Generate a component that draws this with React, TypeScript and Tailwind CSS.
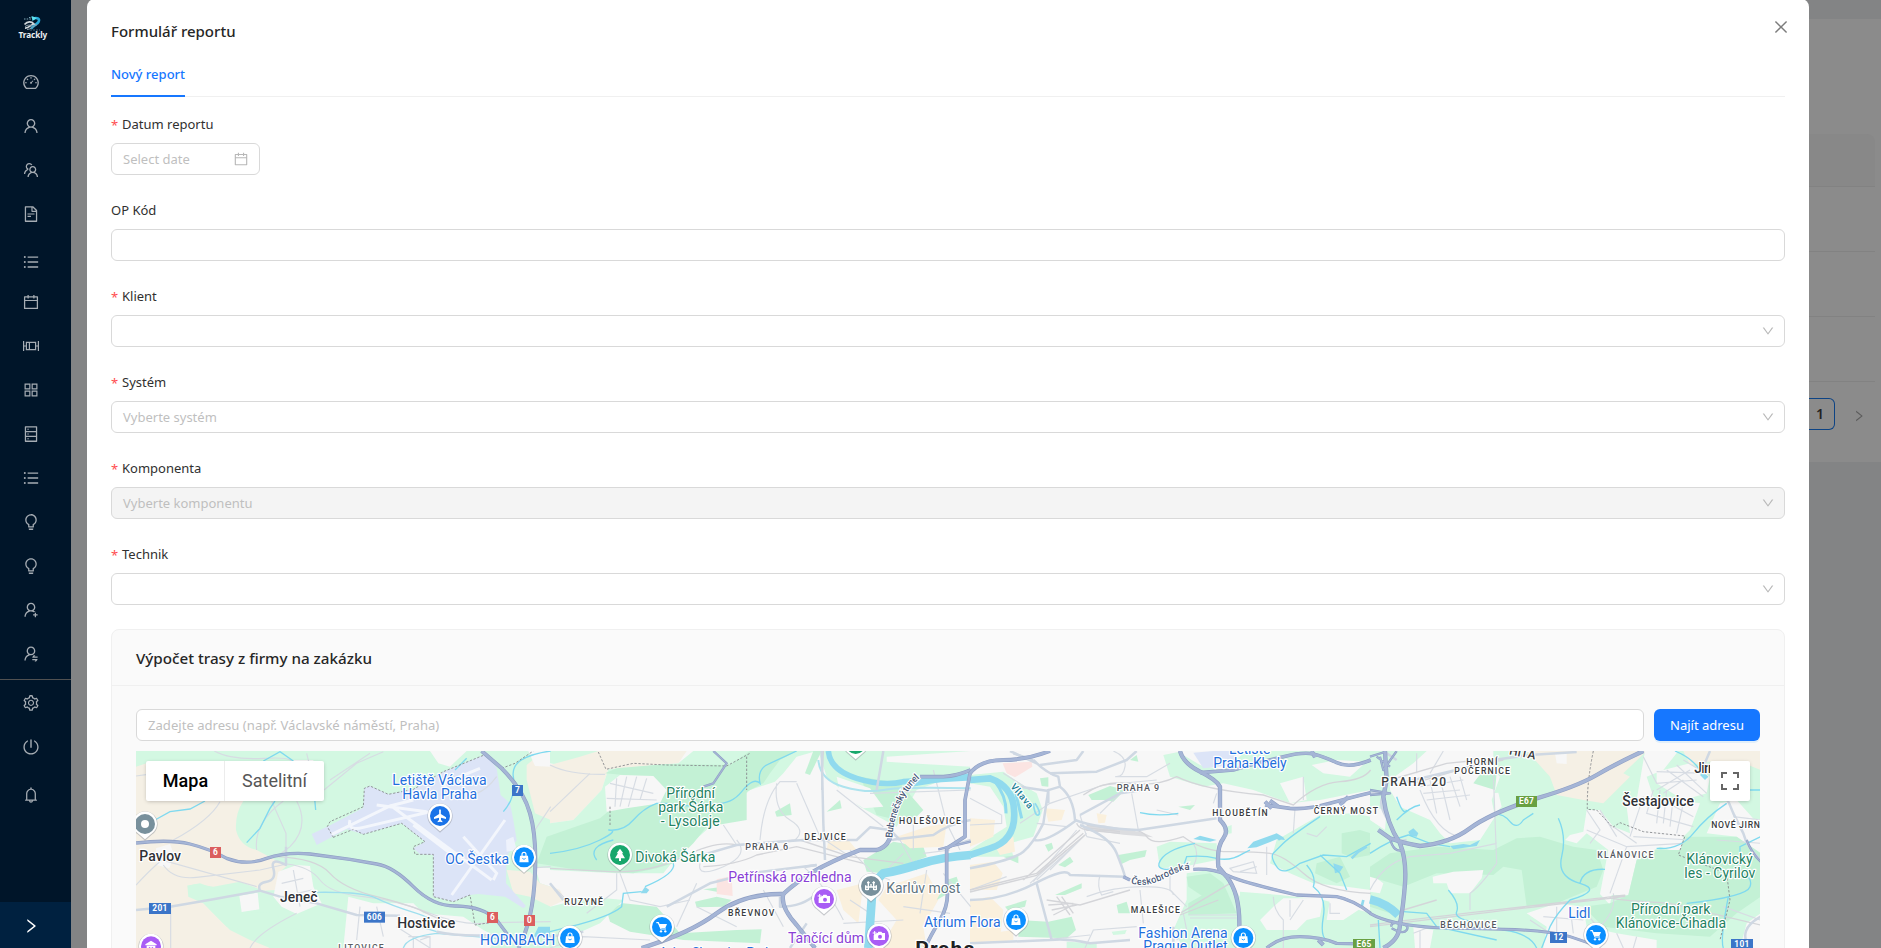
import type { ReactNode } from "react";
import type { IconType } from "react-icons";
import {
  AiOutlineAppstore,
  AiOutlineBell,
  AiOutlineBulb,
  AiOutlineCalendar,
  AiOutlineClose,
  AiOutlineDashboard,
  AiOutlineDatabase,
  AiOutlineDown,
  AiOutlineFileText,
  AiOutlinePoweroff,
  AiOutlineRight,
  AiOutlineSetting,
  AiOutlineTeam,
  AiOutlineUnorderedList,
  AiOutlineUser,
  AiOutlineUserAdd,
  AiOutlineUserSwitch,
} from "react-icons/ai";

/* ---------- Sidebar ---------- */

function Logo() {
  return (
    <svg viewBox="0 0 30 26" className="ml-[18px] mt-[15px] h-[26px] w-[30px] shrink-0" fill="none">
      <path d="M6 4h8M11 2.5h6" stroke="#7fa9b8" strokeWidth="1" strokeDasharray="1.5 1.2" />
      <path d="M15 3.4c5-1.400 7 .8 5.500 3.600-1.500 2.600-6 3.400-7.500 7" stroke="#27a9d8" strokeWidth="2.600" />
      <path d="m13.500 1 5.500 2-4.500 3Z" fill="#5fe3f2" />
      <path d="M6.500 9.500c3-3.500 7-3.500 9.500-.5-3 .2-5 4.500-9 4.200" stroke="#cfd6da" strokeWidth="1.700" />
      <path d="M7 11.500c3-2 5-1.500 7-.8M9 14.500c4 .3 7-4.500 10-4.800" stroke="#8ea0aa" strokeWidth="1" />
      <path d="M12 15h10" stroke="#4d6878" strokeWidth="1" strokeDasharray="2 1" />
      <text x="0.600" y="23.200" fontSize="8.200" fontWeight="700" fontFamily="Noto Sans, sans-serif" fill="#eef1f3" textLength="28.600">
        Trackly
      </text>
    </svg>
  );
}

function BarrelIcon({ className }: { className?: string }) {
  return (
    <svg viewBox="-1 -1 18 18" className={className} fill="none" stroke="currentColor" strokeWidth="1.200">
      <path d="M.6 3v10M15.400 3v10M.6 8h2.800M12.600 8h2.800M3.400 4.400h9.200v7.200H3.400ZM6.400 4.400v7.200" />
    </svg>
  );
}

const mainItems: (IconType | typeof BarrelIcon)[] = [
  AiOutlineDashboard,
  AiOutlineUser,
  AiOutlineTeam,
  AiOutlineFileText,
  AiOutlineUnorderedList,
  AiOutlineCalendar,
  BarrelIcon,
  AiOutlineAppstore,
  AiOutlineDatabase,
  AiOutlineUnorderedList,
  AiOutlineBulb,
  AiOutlineBulb,
  AiOutlineUserAdd,
  AiOutlineUserSwitch,
];

function Sidebar() {
  return (
    <aside className="flex w-[71px] shrink-0 flex-col bg-[#001529] text-[#a6adb4]">
      <Logo />
      <nav className="mt-[19px] flex flex-col">
        {mainItems.map((Icon, i) => (
          <div key={i} className={i === 4 ? "flex h-11 items-center pl-[22px] pt-2" : "flex h-11 items-center pl-[22px]"}>
            <Icon className="size-[18px]" />
          </div>
        ))}
      </nav>
      <div className="mt-[3px] h-px bg-[#515151]" />
      <div className="mt-px flex h-11 items-center pl-[22px]">
        <AiOutlineSetting className="size-[18px]" />
      </div>
      <div className="flex h-11 items-center pl-[22px]">
        <AiOutlinePoweroff className="size-[18px]" />
      </div>
      <div className="mt-1 flex h-11 items-center pl-[22px]">
        <AiOutlineBell className="size-[18px]" />
      </div>
      <div className="mt-auto flex h-[46px] items-center bg-[#002140] pl-[22px] pt-0.5 text-white">
        <AiOutlineRight className="size-[18px]" />
      </div>
    </aside>
  );
}

/* ---------- Form ---------- */

function Field({ label, required, children }: { label: string; required?: boolean; children: ReactNode }) {
  return (
    <div className="mb-6 flex flex-col gap-2">
      <div className="flex h-[22px] items-center gap-1 text-[13px] leading-[22px] text-[#303030]">
        {required && <span className="w-[7px] pt-0.5 text-[13px] text-[#ff4d4f]">*</span>}
        <span>{label}</span>
      </div>
      {children}
    </div>
  );
}

function Select({ placeholder, disabled }: { placeholder?: string; disabled?: boolean }) {
  return (
    <div
      className={
        disabled
          ? "flex h-8 items-center justify-between rounded-md border border-[#d9d9d9] bg-[#f4f4f4] pl-[11px] pr-[9px] text-[13px] text-[#bfbfbf]"
          : "flex h-8 items-center justify-between rounded-md border border-[#d9d9d9] bg-white pl-[11px] pr-[9px] text-[13px] text-[#bfbfbf]"
      }
    >
      <span className="pt-0.5">{placeholder}</span>
      <AiOutlineDown className="size-3.5 text-[#b8b8b8]" />
    </div>
  );
}

/* ---------- Map ---------- */

const GREEN = "#d3f8e2";
const PARK = "#c3f1d5";
const SAND = "#f5f0e5";
const TOWN = "#f7f7f7";
const SHOP = "#faf0dd";
const WATER = "#90daee";
const AIR = "#dce4f7";

type Area = [string, string];
type Line = [string, string, number];

type Tile = {
  x: number;
  areas: Area[];
  minor: string[];
  rail: string[];
  water: Line[];
  roads: string[];
  highways: Line[];
  dashed: string[];
};

const tiles: Tile[] = [
  {
    x: 0,
    areas: [
      [GREEN, "M18 33H1262V624H18Z"],
      [SAND, "M18 80 60 66 110 90 240 183H340Q315 220 318 270 330 320 380 330L470 378 445 400 440 450 400 452 330 425 250 440 200 432 172 437 175 470 220 490 300 570 360 600 420 624H18Z"],
      [GREEN, "M172 437 210 430 280 455 330 470 340 515 440 520 460 560 640 590 640 624H420L340 570 290 560 240 510Z"],
      [SAND, "M1190 75 1220 50 1262 70V240L1215 220 1190 120Z"],
      [TOWN, "M1215 380 1262 385V440L1230 430Z"],
      [SAND, "M1130 390 1200 395 1230 430 1262 440V500L1200 470 1150 460Z"],
      [TOWN, "M78 325 120 312 132 345 118 385 80 375Z"],
      [TOWN, "M445 395 500 375 540 378 550 440 575 490 500 522 455 500 430 470Z"],
      [TOWN, "M328 467 383 458 388 508 335 516Z"],
      [TOWN, "M655 470 730 490 850 490 880 520 1000 530 1060 570 1100 590 1080 624H640Z"],
      [TOWN, "M900 33H1010L960 80 925 70Z"],
      [TOWN, "M1195 33H1262V80L1215 78Z"],
      [TOWN, "M490 60H550V80H500Z"],
      [AIR, "M545 282 596 258 700 203 703 145 720 138 775 163 850 148 940 95 1070 42 1100 85 1112 165 1140 190 1150 240 1160 300 1130 350 1128 430 1188 498 1180 505 1125 470 1045 462 1020 465 970 485 910 470V345L870 343 850 325 885 305 815 250 700 283 650 268 560 315Z"],
      ["#eef2fc", "M1128 300 1150 290 1160 330 1130 335Z"],
      [WATER, "M1225 560H1262V590L1210 592Z"],
    ],
    minor: [
      "M18 435Q60 390 95 360L380 440M100 375Q130 420 200 412L390 390 470 372",
      "M130 300Q240 240 270 185M122 624V500M18 108 48 104M360 624Q380 580 500 520",
      "M470 372Q540 380 570 420T700 470 900 520 1080 548L1262 545",
      "M380 330Q370 250 460 183M425 183 468 280V330M500 183Q540 260 480 320L440 350",
      "M253 33Q300 60 400 55T480 70M582 150 680 70 760 35M600 120 720 40M530 40 540 80",
      "M455 430 520 415M460 470 545 450M490 390 510 500M690 500 680 600M740 500 760 590M800 560 900 624",
      "M835 590H900V624M850 624V590M870 600 900 590",
      "M1100 110Q1070 150 1040 160M1262 380 1220 383M1215 270 1262 200",
    ],
    rail: ["M440 350Q560 355 600 400T740 470 880 515 960 550"],
    water: [
      ["#7fd9ef", "M75 240 120 215 180 207 225 183", 4],
      ["#7fd9ef", "M350 308 390 265 420 205 435 183M400 63 450 35 490 63M553 165 557 210", 4],
      ["#9fdfee", "M560 457Q700 455 740 475T860 520 870 560L920 575M820 624Q830 590 920 580L1100 595", 4],
      ["#7fd9ef", "M1120 215Q1160 170 1150 110T1262 33M975 90 1010 55", 4],
    ],
    roads: ["M18 510 120 500 250 478 390 452 450 470 560 490 680 525 810 527M390 452Q380 430 410 425T430 385 468 375V320", "M920 575Q980 590 1100 585L1150 600"],
    highways: [
      ["#a5b5d6", "M18 309Q120 297 180 312T290 355Q350 378 410 355 470 335 540 342L660 358 740 372Q790 380 850 440T980 498Q1060 500 1100 540L1145 600", 8],
      ["#a5b5d6", "M1055 33 1115 85Q1180 150 1200 220T1215 400Q1210 540 1165 624", 10],
    ],
    dashed: [
      "M610 292 592 260 600 245 700 200 703 145 720 138 775 163 850 148 940 95 1070 42",
      "M610 292 670 268 700 283 815 250 885 305 850 320 855 343H910V470L970 485 1020 465 1035 555 1080 548",
      "M1115 85 1155 70 1210 33",
    ],
  },
  {
    x: 1260,
    areas: [
      [TOWN, "M0 33H1262V624H0Z"],
      [GREEN, "M0 33H150L110 90 0 70Z"],
      [SAND, "M0 75 90 50 145 33H410L385 70 175 88 155 150 70 240 0 250Z"],
      [SAND, "M0 438 30 450 45 480 0 500Z"],
      [GREEN, "M385 70 430 33H800L740 50 700 100 675 125 600 150 480 260 380 350 340 400 200 400 0 390V250L70 240 155 150 175 88Z"],
      [PARK, "M165 100 200 85 350 72 540 75 600 33H740L690 60 660 100 640 130 590 155 590 240 470 260 430 310 370 370 320 385 250 400 100 392 -40 370 -10 290 150 235 180 210 300 190 340 150 310 110 220 105Z"],
      [TOWN, "M165 140 210 105 310 108 350 150 330 190 230 205 170 215Z"],
      [PARK, "M170 510 220 490 320 500 390 580 560 570 635 568 630 610 400 600 240 575 180 545Z"],
      [PARK, "M435 485 500 470 545 480 520 500 440 502ZM460 448 520 440 515 458Z"],
      [GREEN, "M0 500 120 470 220 480 150 550 60 590 30 624H0Z"],
      [GREEN, "M805 33H1262V90L1100 150 1040 260 930 200 830 110Z"],
      [PARK, "M930 110 1050 130 1120 210 1080 250 980 225Z"],
      [TOWN, "M860 110 960 145 1000 200 940 205 870 160Z"],
      [TOWN, "M1010 50 1262 33V80L1080 70 1010 65Z"],
      [PARK, "M675 215 720 190 725 225 680 230ZM830 215 870 180 875 205Z"],
      [PARK, "M765 100 790 33H815L780 105Z"],
      [PARK, "M940 360 1030 305 1120 320 1130 350 1000 400 950 395Z"],
      [SHOP, "M1040 290 1130 260 1190 250 1180 320 1080 325ZM835 300 870 270 920 330 830 330Z"],
      [SHOP, "M860 450 940 430 925 550 880 510ZM1010 440 1130 400 1170 470 1120 560 1130 624H990L1040 540 985 480Z"],
      ["#fbe4e2", "M500 418 545 408 548 468 500 462Z"],
      [WATER, "M272 460 285 440 298 450 290 460Z"],
      [PARK, "M1160 480 1230 440 1220 410 1190 420Z"],
    ],
    minor: [
      "M0 75Q60 105 165 103M0 215 120 100M0 430 70 500M110 520 200 450V400M210 400 240 480 330 500 420 480",
      "M180 130 310 160M200 115 195 200M230 110 210 200M260 110 235 200M290 115 270 180M170 175 320 180",
      "M630 300Q640 180 690 125H740M680 130Q670 210 720 240T735 300M520 255 560 315M740 130 810 290 900 350",
      "M0 624 100 590 300 600M440 430 380 560M560 300Q600 345 520 380T450 370M860 150 1000 260",
      "M900 330 970 400 1020 420M1050 300 1100 390M1120 340 1200 330M1090 250V330M1000 400 1060 340",
      "M760 380Q830 440 880 540M880 550 1060 540M1130 390 1110 520M1060 500 1200 520M1180 400 1262 500",
      "M960 160 1262 150M1150 90 1190 250 1230 330M900 480 960 520M640 450 700 560M440 500 560 560",
    ],
    rail: ["M0 385 180 395Q300 400 400 350T560 315L740 300M460 380Q560 375 620 345L740 320 940 370", "M750 300 900 350 1060 370M820 33 815 150"],
    water: [
      ["#7fd9ef", "M0 340Q90 330 150 300T175 270Q220 275 250 240T320 190H350Q430 205 470 190 540 200 575 155T630 130Q620 85 660 70L740 33", 4],
      ["#7fd9ef", "M140 360Q110 320 190 300M285 440Q380 400 370 370M275 455 220 460 215 500Q180 530 60 560L0 575", 4],
      [WATER, "M835 33Q840 90 920 115T1060 125L1262 113", 17],
      ["#aee3ee", "M805 60Q810 120 880 140T1000 150 1262 145", 6],
      [WATER, "M1262 345Q1180 350 1110 372T1000 400Q965 430 965 480L955 624", 26],
      [WATER, "M1080 135 1262 105", 12],
    ],
    roads: [
      "M440 350 560 315 760 300 920 300 960 262 1020 270 1050 300",
      "M815 33 820 250 825 360M350 500 480 430 600 400 800 375M0 430 40 480",
      "M1262 240Q1200 250 1150 285L1020 300M1262 300 1180 325M720 624 770 550M0 590 100 575",
      "M765 380 800 375M690 470V500Q760 500 800 460M1000 33 980 150",
    ],
    highways: [
      ["#a5b5d6", "M490 33 530 70 490 130 460 140", 5],
      ["#a5b5d6", "M275 624Q420 580 500 520T700 462Q740 425 790 395T930 330H980Q1020 320 1025 270", 11],
      ["#a5b5d6", "M700 462Q690 500 740 555L795 624", 11],
      ["#a5b5d6", "M1110 110H1180Q1220 108 1262 90M1190 320V430Q1200 490 1170 540T1125 624M1262 90 1245 180V290L1190 325", 9],
      ["#a5b5d6", "M1165 328 1262 305", 5],
    ],
    dashed: ["M145 36 168 88 250 70 350 75 530 78 600 40M590 50V150M180 200V260"],
  },
  {
    x: 2520,
    areas: [
      [TOWN, "M0 33H1202V624H0Z"],
      ["#fbe4e2", "M98 70 185 65 187 80 135 112 110 100Z"],
      [GREEN, "M0 105 100 95 150 130 200 160 218 210 190 290 120 310 130 350 0 350Z"],
      [TOWN, "M0 130 60 140 100 200 110 260 0 330Z"],
      [SHOP, "M0 235 75 240 70 290 0 320ZM70 310 130 290 135 335 90 345ZM225 205 285 210 275 240 235 245ZM380 220 410 225 405 248 385 250Z"],
      [SHOP, "M0 375 70 365 98 400 80 450 0 450ZM0 480 60 470 100 510 90 600 0 610Z"],
      [SHOP, "M60 580 130 570 130 600 60 610Z"],
      [PARK, "M355 165 420 138 465 150 430 185 410 180 365 180ZM480 60 500 45 505 65ZM210 115 235 112 235 140 215 138ZM625 200 675 195 660 210Z"],
      [PARK, "M445 345 530 330 525 350 480 360 455 372ZM265 375 300 350 310 365 285 382ZM225 315 245 308 250 325 235 335ZM100 350 145 345 145 370Z"],
      [PARK, "M255 465 335 430 335 445 285 465ZM105 500 170 480 165 500 115 512ZM440 495 470 485 480 520 445 520Z"],
      [PARK, "M145 540 235 545 305 530 318 570 290 595 145 590Z"],
      [GREEN, "M290 605 380 610 380 624H290ZM425 575 470 570 465 582 430 585Z"],
      [GREEN, "M580 45 640 33H1202V150L1050 180 960 190 850 150 760 130 700 140 600 110Z"],
      [TOWN, "M620 33H830L760 90 690 75Z"],
      [AIR, "M670 38 730 33H800L790 75 700 85Z"],
      [TOWN, "M1025 75 1100 60 1190 65 1140 110 1060 100ZM930 130 1000 110 1010 180 960 190Z"],
      [TOWN, "M755 150 970 190 1040 220 940 300 780 320Z"],
      [GREEN, "M560 320 600 305 740 310 740 360 640 380 570 385Z"],
      [GREEN, "M770 260 785 255 785 280 770 282Z"],
      [GREEN, "M650 400 720 390 770 410 830 500 800 624H640L610 570 650 480Z"],
      [GREEN, "M810 455 930 465 1060 480 1202 520V624H810Z"],
      [GREEN, "M920 300 1050 225 1150 220 1202 230V450L1130 440 1030 430 960 400 900 370Z"],
      [PARK, "M1115 280 1170 270 1202 280V345L1150 355 1115 340ZM1040 370 1110 350 1140 410 1100 430 1035 400ZM650 410 720 400 760 430 700 470 655 440Z"],
      [PARK, "M655 490 760 430 800 520 655 525Z"],
      [TOWN, "M910 500 940 475 1060 475 1050 530 1010 540 980 570 890 570 870 540ZM1080 480 1180 500 1120 540 1070 540Z"],
      [WATER, "M832 325 850 305 920 280 940 292 945 300 920 298 860 322Z"],
      [WATER, "M670 297 690 287 740 300 720 305ZM1090 370 1120 380 1110 395 1095 400Z"],
      ["#dcdde0", "M335 258 400 256 460 266 520 278 550 292 460 284 400 276 350 272Z"],
    ],
    minor: [
      "M430 33Q470 50 465 80T440 110 530 110M530 110 600 70M0 175 95 225V250L0 255M150 250 240 190 400 135 560 120",
      "M485 160 505 270M330 225 350 290M200 420 330 300M190 425 320 270M180 430 290 330M240 390 350 280",
      "M390 405Q380 440 395 465L430 455M350 470Q430 440 520 440T610 465M520 550 510 450M390 220 450 160",
      "M740 160 730 190M670 310Q690 340 670 380M600 400 600 450 650 500M560 210 625 225",
      "M780 385 850 365 860 400 790 395ZM890 320V405M810 395 860 380M970 280 975 205M1000 110 1000 180",
      "M910 470Q910 510 940 540V624M960 480V530M1000 480 960 540M1080 490 1080 520 1110 520M1010 280 1040 290 1070 260",
      "M655 525H800M660 534H800M640 520 650 570 620 600M345 624 370 570 500 560M360 585 220 600",
      "M200 250 290 260M0 450 110 410M100 100 180 150M350 290 450 310",
    ],
    rail: [
      "M320 250Q330 280 420 270T530 290 640 290Q700 335 780 335T900 340 1000 400 1202 460",
      "M0 450 200 400 340 280M0 456 200 406 345 285M160 420 330 270",
      "M340 165Q400 120 480 130T620 110Q700 150 880 165L970 195Q1040 130 1110 125T1202 90",
      "M230 480 330 495 480 450M235 495 310 490M245 510 320 495M250 525 310 495M260 470 300 525M275 470 310 520",
      "M630 520 780 430M630 525 745 480M340 262 450 275M350 270 450 280M350 256 440 268",
    ],
    water: [
      [WATER, "M0 120 60 115Q130 140 132 210 140 300 60 325L0 345", 20],
      [WATER, "M75 125Q110 170 108 220M135 150 155 235", 9],
      [WATER, "M190 190Q195 230 205 225T195 190", 5],
      ["#7fd9ef", "M675 310Q580 330 567 370 560 400 640 380M640 380 650 350Q700 345 740 355T820 340L840 330M510 218Q560 230 625 220", 4],
      ["#7fd9ef", "M1050 230Q960 290 940 310T910 340 920 380 990 370L1060 345 1130 350 1202 310M1050 345 1110 400 1130 450M1010 375Q1040 410 1030 440 1070 470 1060 530T1070 600", 4],
      [WATER, "M1145 355 1165 335 1190 320M920 285 930 300M1180 480 1175 500", 8],
    ],
    roads: [
      "M0 385Q130 360 160 335T220 250L235 150V190",
      "M190 60Q230 100 265 110L270 140 230 152 150 140M270 140Q310 170 315 240 380 265 505 270L740 235",
      "M330 225 450 160 520 150M330 255Q420 290 440 340T465 410M0 480Q100 480 195 430T300 405L465 410",
      "M200 430 245 600M0 610 240 600Q300 595 360 610L480 600M210 75 320 60 340 33M190 298Q220 315 320 240M120 33 200 70",
      "M240 100 380 95 470 60 500 33M130 40 190 60M610 624V560",
    ],
    highways: [
      ["#a5b5d6", "M0 100Q30 60 100 60 170 60 240 33", 10],
      ["#a5b5d6", "M630 33Q640 70 690 95T750 140V240Q780 270 760 295 740 320 745 380L770 410Q810 460 808 560", 11],
      ["#a5b5d6", "M690 98 790 90 860 70 940 50Q1000 35 1030 42T1100 68 1202 60M885 195 960 205Q1010 210 1080 190T1202 158", 9],
      ["#a5b5d6", "M670 388Q730 385 770 405T980 465L1100 470Q1150 480 1202 520M460 410 480 420", 8],
      ["#a5b5d6", "M890 624Q930 590 990 590T1100 610L1202 612", 8],
      ["#a5b5d6", "M885 185 905 205M900 182 925 200M1110 195 1135 170M1025 33 1035 52M1045 600 1060 615M745 385 770 410", 10],
    ],
    dashed: [],
  },
  {
    x: 3720,
    areas: [
      [GREEN, "M0 33H1172V624H0Z"],
      [TOWN, "M60 120 130 70 170 33H370V90L390 110 365 180 375 230 330 300 240 310 210 280 180 240 90 200 60 150Z"],
      [TOWN, "M0 200 50 210 45 270 0 240ZM0 400 40 430 30 460 0 455Z"],
      [SAND, "M470 33H830L760 100 780 110 700 190 640 180 560 165 540 110Z"],
      [TOWN, "M555 40 590 38 590 72 560 70Z"],
      [TOWN, "M825 33 925 33 880 90 830 110 850 170 990 190 960 270 940 290 930 340 870 320 800 360 775 465 725 465 720 495 690 462 715 330 650 280 620 310 585 300 600 285 640 275 650 210 690 210 730 260 780 280 770 200 800 180Z"],
      [SAND, "M940 33H1172V90L1110 65H1010L960 75Z"],
      [TOWN, "M860 95 960 70 1020 110 1010 160 940 180 860 130Z"],
      [TOWN, "M1050 190 1100 180 1172 260V340L1100 290 1010 280Z"],
      [TOWN, "M1130 550 1172 520V624H1110ZM130 560 190 570 180 624H135Z"],
      [PARK, "M60 340 200 320 370 330 440 295 510 290 610 320 680 330 700 390 680 440 560 490 470 500 455 390 400 380 370 405 200 400 100 440 0 410V380Z"],
      [PARK, "M840 330 930 330 950 290 1100 290 1172 340V470L1100 520 1020 590 860 580 700 560 640 500 720 490 775 465 800 360Z"],
      [PARK, "M310 130 340 90 380 100 375 150ZM60 520 0 500 0 480Z"],
      [TOWN, "M188 410 250 395 340 390 335 415 300 460 240 460 230 430 190 430Z"],
      [TOWN, "M470 520 560 490 640 500 650 560 740 580 860 600 860 624H520L530 560Z"],
      [TOWN, "M370 160 385 158 395 200 375 220Z"],
      [WATER, "M115 275 130 265 145 280 140 290 120 288ZM240 318 280 312 300 315 330 300 320 318 250 328Z"],
    ],
    minor: [
      "M150 140 280 120M160 160 270 150M170 180 300 165M180 120 200 220M210 115 240 240M240 110 270 200M270 110 290 180M150 150Q200 280 270 290",
      "M370 100 380 370Q330 440 300 460V510M0 450Q40 370 120 350L240 340 380 310M140 100 140 40M220 33 180 100",
      "M820 50 850 110 860 130 980 120M860 150 960 90M880 160 940 120M850 150 830 220 970 260M860 170 970 230M870 150 860 250M890 150 880 250M910 170 900 260M940 190 920 280",
      "M650 270 770 320 940 310M650 210 690 270 660 310M690 210 740 290M790 290 960 300M770 320 720 460M745 340 800 350M730 260 800 310M820 170 780 290",
      "M730 460Q740 510 690 560M520 530 640 540M480 540 540 580M560 500V600M600 500 610 580M640 510 700 580",
      "M860 95 1010 100M920 75 1010 160M890 90 1000 170M940 60 990 90M130 580 180 560M150 570 150 624M740 580 760 624M800 590 790 624",
      "M1040 300 1172 310M1172 240 1090 230M1060 500 1172 540",
    ],
    rail: ["M0 555Q200 530 330 515T640 480 740 468 900 490M0 560Q200 536 330 520T640 484 740 470", "M60 120 230 70 330 60M130 130 300 80 400 60", "M900 490 1172 555M100 510 200 480"],
    water: [
      ["#7fd9ef", "M370 222Q400 220 420 245T460 240L490 220M0 340Q60 300 115 285L180 310 240 320M80 240Q120 200 150 195M80 170Q100 230 110 210", 4],
      ["#7fd9ef", "M565 235Q590 290 575 350T630 430 600 480Q560 520 540 560L515 624M630 430Q640 385 705 388", 4],
      ["#7fd9ef", "M860 325Q930 330 970 280T1070 190M915 33Q980 60 1000 110M950 490Q1130 470 1140 440T1110 400L1110 320 1172 290M1110 150 1172 150", 4],
      ["#7fd9ef", "M235 450Q270 490 260 515T340 550L400 570Q480 580 500 624M25 540 30 624M100 515 170 520 200 560 380 600M1075 470Q1050 600 1060 624", 4],
      [WATER, "M0 478Q50 490 85 525", 25],
      [WATER, "M995 100 1010 115", 14],
    ],
    roads: [
      "M90 130 300 80 370 60 480 45 620 36",
      "M0 160Q60 150 40 170T60 250M30 270Q60 310 110 300M40 33 80 60",
      "M1172 360Q1130 320 1120 280L1090 220Q1080 190 1060 160M1000 80 1020 33M1172 530Q1100 570 1140 624",
    ],
    highways: [
      ["#a5b5d6", "M820 33Q740 70 680 105T500 175Q360 220 300 265T150 318Q100 310 60 295L25 270M45 33 50 120 40 170Q50 250 90 310 110 360 105 430T90 550Q90 600 40 624", 11],
      ["#a5b5d6", "M0 520Q60 555 200 563L400 568Q530 570 600 590L660 610", 7],
      ["#a5b5d6", "M0 150 60 160 0 165M20 50 60 80M80 33 40 90 30 50M65 560Q60 545 90 550T110 570 65 565M60 295Q70 340 100 330", 5],
      ["#a5b5d6", "M0 50 45 36M1130 300Q1145 340 1172 365", 5],
    ],
    dashed: ["M670 33Q650 130 652 208L680 210 728 262 750 248 820 275 945 288 925 345 1070 400 1080 480 1050 600"],
  },
];

type LabelProps = { x: number; y: number; len: number; children: string; size?: number; color?: string; weight?: number; rotate?: number };

function Label({ x, y, len, children, size = 42, color = "#1f6fdd", weight = 400, rotate }: LabelProps) {
  return (
    <text
      x={x}
      y={y}
      textLength={len}
      fontSize={size}
      fill={color}
      fontWeight={weight}
      fontFamily="Roboto, sans-serif"
      stroke="#ffffff"
      strokeWidth="7"
      strokeLinejoin="round"
      paintOrder="stroke"
      transform={rotate ? `rotate(${rotate} ${x} ${y})` : undefined}
    >
      {children}
    </text>
  );
}

function Pin({ x, y, color, children }: { x: number; y: number; color: string; children?: ReactNode }) {
  return (
    <g transform={`translate(${x} ${y})`}>
      <path d="M-22 31 0 50 22 31A38 38 0 1 0-22 31Z" fill="#8a8f96" opacity=".45" />
      <path d="M-22 27 0 46 22 27A36 36 0 1 0-22 27Z" fill="#fff" />
      <circle r="30" fill={color} />
      {children}
    </g>
  );
}

const BagGlyph = () => (
  <g>
    <path d="M-12-5H12L14 15H-14Z" fill="#fff" />
    <path d="M-6-4V-9A6 6 0 0 1 6-9V-4" fill="none" stroke="#fff" strokeWidth="3.500" />
    <path d="M-5 3Q0 9 5 3" fill="none" stroke="#0a8fff" strokeWidth="2.500" />
  </g>
);

const CartGlyph = () => (
  <g>
    <path d="M-17-13H-11L-3 6H12" fill="none" stroke="#fff" strokeWidth="3.500" />
    <path d="M-10-9H15L10 3H-5Z" fill="#fff" />
    <circle cx="-3" cy="13" r="3.500" fill="#fff" />
    <circle cx="10" cy="13" r="3.500" fill="#fff" />
  </g>
);

const CameraGlyph = () => (
  <g>
    <path d="M-16-2V12H18V-9H10L7-13H-2L-4-9H-6" fill="#fff" />
    <path d="M-13-15V-3M-19-9H-7" stroke="#fff" strokeWidth="3" />
    <circle cx="3" cy="2" r="6" fill="#a95cf5" />
  </g>
);

function Shield({ x, y, w, color, children }: { x: number; y: number; w: number; color: string; children: string }) {
  return (
    <g>
      <rect x={x} y={y} width={w} height="33" fill={color} />
      <text x={x + w / 2} y={y + 25} textAnchor="middle" fontSize="25" fontWeight="700" letterSpacing="1" fill="#fff" fontFamily="Roboto, sans-serif">
        {children}
      </text>
    </g>
  );
}

const DARK = "#2f3136";
const PARKTEXT = "#238262";
const VIOLET = "#8a3fd6";
const BLUE = "#3b75c8";
const RED = "#db5e5e";

function RouteMap() {
  return (
    <svg viewBox="18 33 4872 591" className="block h-[197px] w-[1624px]" preserveAspectRatio="none">
      {tiles.map((t) => (
        <g key={t.x} transform={`translate(${t.x} 0)`}>
          {t.areas.map(([fill, d], i) => (
            <path key={i} d={d} fill={fill} />
          ))}
        </g>
      ))}
      {tiles.map((t) => (
        <g key={t.x} transform={`translate(${t.x} 0)`} fill="none">
          {t.minor.map((d, i) => (
            <path key={i} d={d} stroke="#d7dce3" strokeWidth="3.500" />
          ))}
          {t.rail.map((d, i) => (
            <path key={i} d={d} stroke="#d4d5d9" strokeWidth="4" />
          ))}
          {t.water.map(([c, d, w], i) => (
            <path key={i} d={d} stroke={c} strokeWidth={w} />
          ))}
          {t.roads.map((d, i) => (
            <path key={i} d={d} stroke="#cfd8e3" strokeWidth="7.500" strokeLinejoin="round" />
          ))}
          {t.dashed.map((d, i) => (
            <path key={i} d={d} stroke="#85888c" strokeWidth="2.600" strokeDasharray="7 5" />
          ))}
        </g>
      ))}
      <g stroke="#fff" opacity=".65" fill="none" strokeWidth="9">
        <path d="M605 283 780 198 850 180M780 195 1085 420M965 465 1125 240M660 240Q650 275 700 262L900 215M740 195 890 215M850 255 1000 370M960 160 940 130 1050 85M1090 420 1100 400 1000 290" />
      </g>
      {tiles.map((t) => (
        <g key={t.x} transform={`translate(${t.x} 0)`} fill="none" strokeLinejoin="round">
          {t.highways.map(([, d, w], i) => (
            <path key={i} d={d} stroke="#8f9fc4" strokeWidth={w + 2} />
          ))}
          {t.highways.map(([c, d, w], i) => (
            <path key={i} d={d} stroke={c} strokeWidth={w - 1.500} />
          ))}
        </g>
      ))}

      {/* Pavlov – Hostivice */}
      <Label x={787} y={135} len={283}>Letiště Václava</Label>
      <Label x={817} y={177} len={224}>Havla Praha</Label>
      <Label x={946} y={373} len={191}>OC Šestka</Label>
      <Label x={1050} y={616} len={226}>HORNBACH</Label>
      <Label x={28} y={363} len={125} color={DARK} weight={500}>Pavlov</Label>
      <Label x={450} y={486} len={113} color={DARK} weight={500}>Jeneč</Label>
      <Label x={802} y={565} len={174} color={DARK} weight={500}>Hostivice</Label>
      <Label x={625} y={634} len={136} size={26} color="#5a5d62" weight={500}>LITOVICE</Label>
      <Shield x={240} y={321} w={33} color={RED}>6</Shield>
      <Shield x={57} y={489} w={66} color={BLUE}>201</Shield>
      <Shield x={702} y={515} w={63} color={BLUE}>606</Shield>
      <Shield x={1071} y={516} w={33} color={RED}>6</Shield>
      <Shield x={1182} y={525} w={33} color={RED}>0</Shield>
      <Shield x={1146} y={135} w={33} color={BLUE}>7</Shield>
      <Pin x={45} y={252} color="#78909c"><circle r="12" fill="#fff" /></Pin>
      <Pin x={930} y={228} color="#1a73e8">
        <path d="M-2.500-18Q0-22 2.500-18V-6L18 4V9L3 5V12L7 16V19L0 17-7 19V16L-3 12V5L-18 9V4L-2.500-6Z" fill="#fff" />
      </Pin>
      <Pin x={1182} y={352} color="#0a8fff"><BagGlyph /></Pin>
      <Pin x={63} y={619} color="#a95cf5">
        <path d="M-17-6 0-17 17-6V-3H-17ZM-13-2H13V20H-13Z" fill="#fff" />
        <path d="M-5 12V3L0 7 5 3V12" stroke="#a95cf5" strokeWidth="3" fill="none" />
      </Pin>

      {/* Dejvice – Holešovice */}
      <g transform="translate(1260 0)">
        <Label x={349} y={175} len={146} color={PARKTEXT}>Přírodní</Label>
        <Label x={325} y={217} len={195} color={PARKTEXT}>park Šárka</Label>
        <Label x={332} y={259} len={177} color={PARKTEXT}>- Lysolaje</Label>
        <Label x={256} y={367} len={240} color={PARKTEXT}>Divoká Šárka</Label>
        <Label x={535} y={426} len={370} color={VIOLET}>Petřínská rozhledna</Label>
        <Label x={714} y={609} len={228} color={VIOLET}>Tančící dům</Label>
        <Label x={1009} y={459} len={222} color="#5f7582">Karlův most</Label>
        <Label x={1122} y={562} len={230}>Atrium Flora</Label>
        <Label x={586} y={330} len={128} size={27} color="#54585e" weight={500}>PRAHA 6</Label>
        <Label x={763} y={299} len={124} size={26} color="#3a3c40" weight={500}>DEJVICE</Label>
        <Label x={1047} y={251} len={186} size={26} color="#3a3c40" weight={500}>HOLEŠOVICE</Label>
        <Label x={43} y={494} len={116} size={26} color="#3a3c40" weight={500}>RUZYNĚ</Label>
        <Label x={534} y={527} len={139} size={26} color="#3a3c40" weight={500}>BŘEVNOV</Label>
        <Label x={1096} y={649} len={178} size={63} color="#202124" weight={700}>Praha</Label>
        <Label x={326} y={655} len={340} size={42}>Avion Shopping Park</Label>
        <path id="tunnel" d="M1027 294Q1035 180 1112 112" fill="none" />
        <text fontSize="29" fontWeight="500" fill="#4a5a78" stroke="#fff" strokeWidth="6" paintOrder="stroke" fontFamily="Roboto, sans-serif">
          <textPath href="#tunnel" textLength="203">Bubenečský tunel</textPath>
        </text>
        <Pin x={210} y={345} color="#18a76c"><path d="M0-19 10-5H6L15 10H3V18H-3V10H-15L-6-5H-10Z" fill="#fff" /></Pin>
        <Pin x={917} y={12} color="#18a76c" />
        <Pin x={822} y={477} color="#a95cf5"><CameraGlyph /></Pin>
        <Pin x={987} y={588} color="#a95cf5"><CameraGlyph /></Pin>
        <Pin x={963} y={438} color="#78909c">
          <path d="M-16 12V-2M-8 12V-14M8 12V-14M16 12V-2M0 3V-6M-16 3H16M-12-10H-4M4-10H12M-16 11H-8M8 11H16" stroke="#fff" strokeWidth="4" />
        </Pin>
        <Pin x={336} y={561} color="#0a8fff"><CartGlyph /></Pin>
        <Pin x={60} y={594} color="#0a8fff"><BagGlyph /></Pin>
      </g>

      {/* Praha 9 – Černý Most */}
      <g transform="translate(2520 0)">
        <Label x={777} y={43} len={124}>Letiště</Label>
        <Label x={730} y={84} len={220}>Praha-Kbely</Label>
        <Label x={505} y={594} len={268}>Fashion Arena</Label>
        <Label x={520} y={633} len={253}>Prague Outlet</Label>
        <Label x={440} y={153} len={127} size={27} color="#54585e" weight={500}>PRAHA 9</Label>
        <Label x={727} y={227} len={166} size={26} color="#3a3c40" weight={500}>HLOUBĚTÍN</Label>
        <Label x={1031} y={222} len={193} size={26} color="#3a3c40" weight={500}>ČERNÝ MOST</Label>
        <Label x={482} y={518} len={148} size={26} color="#3a3c40" weight={500}>MALEŠICE</Label>
        <Label x={120} y={140} len={88} size={29} color="#1b7f95" weight={500} rotate={50}>Vltava</Label>
        <path id="ceskobrodska" d="M482 430Q530 445 590 412T670 395" fill="none" />
        <text fontSize="29" fontWeight="500" fill="#4a5a78" stroke="#fff" strokeWidth="6" paintOrder="stroke" fontFamily="Roboto, sans-serif">
          <textPath href="#ceskobrodska" textLength="186">Českobrodská</textPath>
        </text>
        <Pin x={138} y={540} color="#0a8fff"><BagGlyph /></Pin>
        <Pin x={820} y={594} color="#0a8fff"><BagGlyph /></Pin>
        <Shield x={1149} y={597} w={66} color="#69a042">E65</Shield>
      </g>

      {/* Praha 20 – Klánovice */}
      <g transform="translate(3720 0)">
        <Label x={34} y={138} len={194} size={36} color="#3a3c40" weight={500}>PRAHA 20</Label>
        <Label x={289} y={75} len={93} size={26} color="#3a3c40" weight={500}>HORNÍ</Label>
        <Label x={253} y={102} len={167} size={26} color="#3a3c40" weight={500}>POČERNICE</Label>
        <Label x={416} y={43} len={80} size={36} color="#3a3c40" weight={500} rotate={11}>HITA</Label>
        <Label x={682} y={354} len={168} size={26} color="#54585e" weight={500}>KLÁNOVICE</Label>
        <Label x={211} y={564} len={168} size={26} color="#54585e" weight={500}>BĚCHOVICE</Label>
        <Label x={1024} y={264} len={163} size={26} color="#3a3c40" weight={500}>NOVÉ JIRNY</Label>
        <Label x={757} y={198} len={215} color={DARK} weight={500}>Šestajovice</Label>
        <Label x={973} y={99} len={82} color={DARK} weight={500}>Jirny</Label>
        <Label x={949} y={373} len={199} color={PARKTEXT}>Klánovický</Label>
        <Label x={943} y={415} len={213} color={PARKTEXT}>les - Cyrilov</Label>
        <Label x={783} y={523} len={238} color={PARKTEXT}>Přírodní park</Label>
        <Label x={737} y={565} len={331} color={PARKTEXT}>Klánovice-Čihadla</Label>
        <Label x={595} y={535} len={66}>Lidl</Label>
        <Shield x={438} y={168} w={63} color="#69a042">E67</Shield>
        <Shield x={540} y={576} w={51} color={BLUE}>12</Shield>
        <Shield x={1083} y={597} w={66} color={BLUE}>101</Shield>
        <Pin x={678} y={585} color="#0a8fff"><CartGlyph /></Pin>
      </g>
    </svg>
  );
}

/* ---------- Page behind the dialog ---------- */

function DimmedPage() {
  return (
    <div className="flex min-w-0 flex-1 flex-col bg-[#838485]">
      <div className="mt-[19px] flex h-[443px] flex-col bg-[#8b8b8b] pt-[115px]">
        <div className="mr-1.5 h-[53px] rounded-tr-lg border-b border-[#828282] bg-[#888888]" />
        <div className="mr-1.5 h-[65px] border-b border-[#828282]" />
        <div className="mr-1.5 h-[65px] border-b border-[#828282]" />
        <div className="mr-1.5 h-[65px] border-b border-[#828282]" />
        <div className="mt-4 flex items-center">
          <div className="flex h-8 w-[26px] items-center rounded-r-md border border-l-0 border-[#0d4384] pl-[7px] text-sm font-semibold text-[#222]">1</div>
          <AiOutlineRight className="ml-[17px] mt-1 size-3.5 text-[#5c5c5c]" />
        </div>
      </div>
    </div>
  );
}

export default function App() {
  return (
    <div className="flex h-screen overflow-hidden bg-[#838485] font-['Noto_Sans',sans-serif] text-[#262626]">
      <Sidebar />

      <main className="-mt-px ml-4 flex h-[1200px] w-[1722px] shrink-0 flex-col rounded-t-lg bg-white px-6 pt-5">
        <header className="flex h-6 items-center justify-between">
          <h1 className="text-[15px] font-medium leading-6">Formulář reportu</h1>
          <AiOutlineClose className="-mr-[5px] -mt-[9px] size-[18px] text-[#7c7c7c]" />
        </header>

        <div className="mt-2 flex h-[46px] border-b border-[#f0f0f0]">
          <div className="flex h-[46px] w-[74px] items-center whitespace-nowrap border-b-2 border-[#1677ff] pt-[3px] text-[13px] font-medium text-[#1677ff]">Nový report</div>
        </div>

        <div className="mt-4 flex flex-col">
          <Field label="Datum reportu" required>
            <div className="flex h-8 w-[149px] items-center justify-between rounded-md border border-[#d9d9d9] pl-[11px] pr-2.5 text-[13px] text-[#bfbfbf]">
              <span className="pt-0.5">Select date</span>
              <AiOutlineCalendar className="size-4 text-[#b8b8b8]" />
            </div>
          </Field>
          <Field label="OP Kód">
            <div className="h-8 rounded-md border border-[#d9d9d9] bg-white" />
          </Field>
          <Field label="Klient" required>
            <Select />
          </Field>
          <Field label="Systém" required>
            <Select placeholder="Vyberte systém" />
          </Field>
          <Field label="Komponenta" required>
            <Select placeholder="Vyberte komponentu" disabled />
          </Field>
          <Field label="Technik" required>
            <Select />
          </Field>
        </div>

        <section className="flex flex-1 flex-col rounded-t-lg border border-[#f0f0f0] bg-[#fafafa]">
          <h2 className="flex h-14 items-center border-b border-[#f0f0f0] px-6 pt-0.5 text-[15.200px] font-medium">Výpočet trasy z firmy na zakázku</h2>
          <div className="flex flex-col gap-2.5 px-6 pt-[23px]">
            <div className="flex gap-2.5">
              <div className="flex h-8 flex-1 items-center rounded-md border border-[#d9d9d9] bg-white px-[11px] pt-0.5 text-[13.100px] text-[#bfbfbf]">
                Zadejte adresu (např. Václavské náměstí, Praha)
              </div>
              <button className="h-8 w-[106px] rounded-md bg-[#1677ff] pt-px text-[13px] text-white shadow-[0_2px_0_rgba(5,145,255,0.1)]">Najít adresu</button>
            </div>
            <div className="relative h-[197px] overflow-hidden">
              <RouteMap />
              <div className="absolute left-2.5 top-2.5 flex h-10 rounded-xs bg-white font-['Roboto',sans-serif] text-lg shadow-[0_1px_4px_-1px_rgba(0,0,0,0.3)]">
                <div className="flex w-[79px] items-center justify-center border-r border-[#ececec] pl-px font-medium text-black">Mapa</div>
                <div className="flex w-[99px] items-center justify-center text-[#565656]">Satelitní</div>
              </div>
              <div className="absolute right-2.5 top-2.5 flex size-10 items-center justify-center rounded-xs bg-white shadow-[0_1px_4px_-1px_rgba(0,0,0,0.3)]">
                <svg viewBox="0 0 18 18" className="size-[18px]" fill="#666">
                  <path d="M0 0v6h2V2h4V0H0zm16 0h-4v2h4v4h2V0h-2zm0 16h-4v2h6v-6h-2v4zM2 12H0v6h6v-2H2v-4z" />
                </svg>
              </div>
            </div>
          </div>
        </section>
      </main>

      <DimmedPage />
    </div>
  );
}
